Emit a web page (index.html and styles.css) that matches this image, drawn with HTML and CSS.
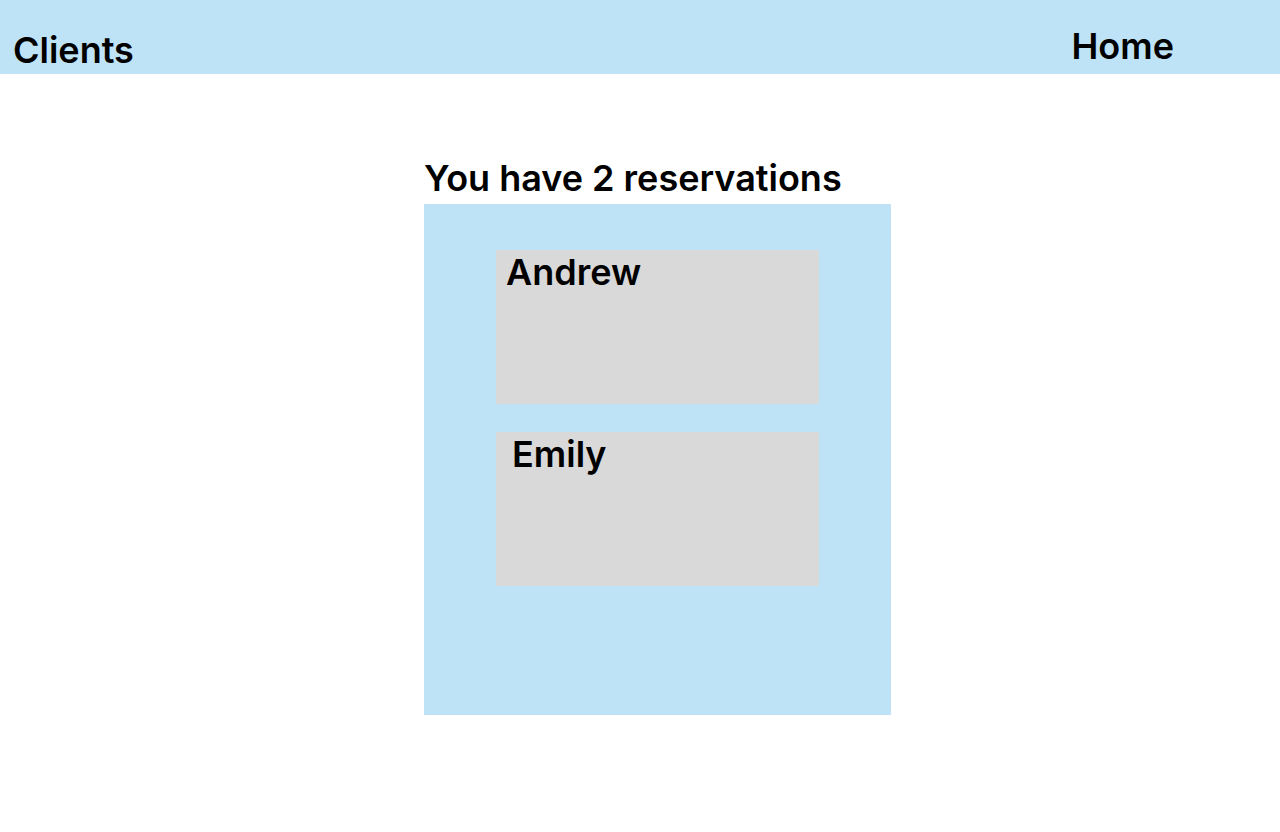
FILE: index.html
```html
<!DOCTYPE html>
<html>
<head>
<meta charset="utf-8">
<link rel="stylesheet" href="styles.css">
</head>
<body>
<header class="topbar">
  <div class="brand">Clients</div>
  <nav class="nav">Home</nav>
</header>
<main class="main">
  <h1 class="title">You have 2 reservations</h1>
  <section class="panel">
    <div class="card card-a"><span class="name">Andrew</span></div>
    <div class="card card-b"><span class="name">Emily</span></div>
  </section>
</main>
</body>
</html>
```
FILE: styles.css
```css
* { box-sizing: border-box; }
html, body { margin: 0; padding: 0; }
body {
  font-family: Inter, "Noto Sans", sans-serif;
  font-weight: 600;
  color: #000;
  background: #fff;
  width: 1280px;
  height: 832px;
  overflow: hidden;
}
.topbar {
  height: 74px;
  background: #BEE3F6;
  display: flex;
  justify-content: space-between;
  font-size: 36px;
  line-height: 44px;
}
.brand { padding: 28px 0 0 13px; }
.nav { padding: 24px 106px 0 0; }
.main {
  padding: 82px 0 0 424px;
}
.title {
  margin: 0;
  font-size: 36px;
  font-weight: 600;
  line-height: 44px;
  height: 48px;
}
.panel {
  width: 467px;
  height: 511px;
  background: #BEE3F6;
  padding: 46px 0 0 72px;
  display: flex;
  flex-direction: column;
  gap: 28px;
}
.card {
  width: 323px;
  height: 154px;
  background: #D9D9D9;
  font-size: 36px;
  line-height: 44px;
}
.card-a { padding-left: 10px; }
.card-b { padding-left: 16px; }
```
